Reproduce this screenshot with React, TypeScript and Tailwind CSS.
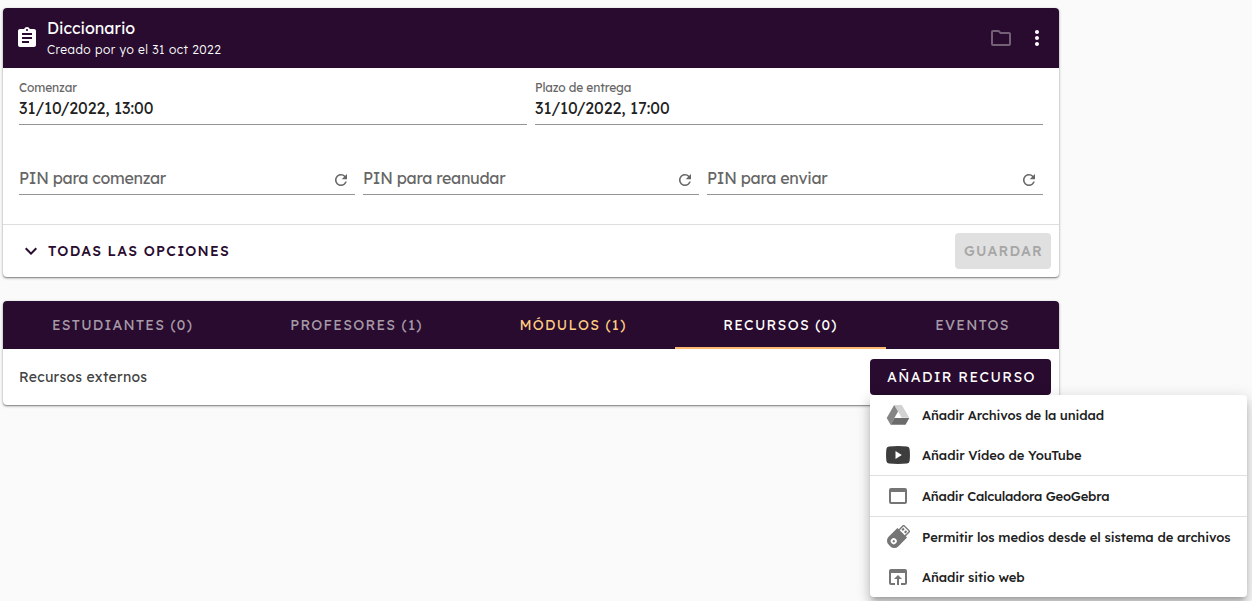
import { ReactNode } from "react";
import {
  MdAssignment,
  MdExpandMore,
  MdMoreVert,
  MdOpenInBrowser,
  MdOutlineFolder,
  MdRefresh,
  MdWebAsset,
} from "react-icons/md";

const DriveIcon = () => (
  <svg viewBox="0 0 24 24" className="size-6 shrink-0">
    <path d="M8.2 2h7.6l7.5 12.8h-7.6z" fill="#d2d2d2" />
    <path d="M8.2 2 12 8.5 4.6 21.7.7 15z" fill="#858585" />
    <path d="M8.4 15h14.9l-3.8 6.7H4.6z" fill="#6b6b6b" />
  </svg>
);

const YouTubeIcon = () => (
  <svg viewBox="0 0 24 24" className="size-6 shrink-0">
    <path
      d="M3 3.4Q12 2.6 21 3.4 23.4 3.6 23.6 6q.7 6 0 12-.2 2.4-2.6 2.6-9 .8-18 0Q.6 20.4.4 18q-.7-6 0-12Q.6 3.6 3 3.4z"
      fill="#3d3d3d"
    />
    <path d="m9.5 8 6.3 4-6.3 4z" fill="#fff" />
  </svg>
);

const UsbIcon = () => (
  <svg viewBox="0 0 24 24" className="size-6 shrink-0">
    <g transform="rotate(45 12 12)" fill="#757575">
      <path d="M7-.9h10v8H7z" />
      <path d="M5.2 6h13.6v12.500a5.500 5.500 0 0 1-5.500 5.500h-2.600a5.500 5.500 0 0 1-5.500-5.500z" />
      <path d="M8.400.4h7.200v5.600H8.400z" fill="#fff" />
      <path d="M9.200 1.800h2v2.500h-2zM12.800 1.800h2v2.500h-2z" />
      <circle cx="12" cy="18" r="3" fill="#fff" />
      <circle cx="12" cy="18" r="1.200" />
    </g>
  </svg>
);

const tabs = [
  { label: "ESTUDIANTES (0)", style: "w-[239px] text-white/60" },
  { label: "PROFESORES (1)", style: "w-[229px] text-white/60" },
  { label: "MÓDULOS (1)", style: "w-[204px] text-[#ffcc80]" },
  { label: "RECURSOS (0)", style: "w-[211px] text-white border-b-2 border-[#ffb870] pt-0.5" },
  { label: "EVENTOS", style: "w-[173px] text-white/60" },
];

const pins = ["PIN para comenzar", "PIN para reanudar", "PIN para enviar"];

function DateField({ label, value }: { label: string; value: string }) {
  return (
    <div className="h-[57px] flex-1 border-b border-[#949494] pt-3">
      <div className="text-xs leading-4 text-[#666] tracking-[-0.13px]">{label}</div>
      <div className="text-base leading-6 text-[#212121]">{value}</div>
    </div>
  );
}

function MenuItem({ icon, children, style }: { icon: ReactNode; children: ReactNode; style: string }) {
  return (
    <li className="flex h-10 items-center gap-3 px-4 text-[#757575]">
      {icon}
      <span className={`whitespace-nowrap text-[13px] leading-5 font-medium text-[#212121] ${style}`}>{children}</span>
    </li>
  );
}

export default function App() {
  return (
    <main className="h-[601px] overflow-hidden bg-[#fafafa] pl-[3px] pt-2 font-['Lexend','Inter',sans-serif]">
      {/* Assignment details */}
      <section className="h-[269px] w-[1056px] rounded bg-white shadow-[0_1px_3px_rgba(0,0,0,0.35),0_1px_1px_rgba(0,0,0,0.25)]">
        <header className="flex h-[60px] items-center rounded-t bg-[#280b2e] pl-3 pr-2.5 text-white">
          <MdAssignment className="size-6" />
          <div className="ml-2 flex-1 pt-0.5">
            <h1 className="text-base leading-5 font-normal">Diccionario</h1>
            <p className="mt-0.5 text-xs leading-5 font-light tracking-[0.48px]">Creado por yo el 31 oct 2022</p>
          </div>
          <MdOutlineFolder className="size-6 opacity-35" />
          <MdMoreVert className="ml-3 size-6" />
        </header>

        <div className="flex gap-2 px-4">
          <DateField label="Comenzar" value="31/10/2022, 13:00" />
          <DateField label="Plazo de entrega" value="31/10/2022, 17:00" />
        </div>

        <div className="mt-[38px] flex gap-2 px-4">
          {pins.map((pin) => (
            <div key={pin} className="flex h-8 flex-1 items-center justify-between border-b border-[#949494] pr-[5px] text-[#666]">
              <span className="pb-0.5 text-base tracking-[-0.3px]">{pin}</span>
              <MdRefresh className="mt-0.5 size-[18px]" />
            </div>
          ))}
        </div>

        <footer className="mt-[29px] flex h-[53px] items-center border-t border-[#dedede] pl-4 pr-2 text-sm font-medium tracking-[1.25px]">
          <button className="flex items-center text-[#280b2e]">
            <MdExpandMore className="size-6" />
            <span className="ml-[5px]">TODAS LAS OPCIONES</span>
          </button>
          <button className="ml-auto h-9 w-24 rounded bg-[#e0e0e0] pl-px text-[#a6a6a6]">GUARDAR</button>
        </footer>
      </section>

      {/* Resources */}
      <section className="mt-6 h-[104px] w-[1056px] rounded bg-white shadow-[0_1px_3px_rgba(0,0,0,0.35),0_1px_1px_rgba(0,0,0,0.25)]">
        <nav className="flex h-12 rounded-t bg-[#280b2e] text-sm tracking-[1.3px]">
          {tabs.map((tab) => (
            <button key={tab.label} className={`whitespace-nowrap ${tab.style}`}>
              {tab.label}
            </button>
          ))}
        </nav>
        <div className="flex h-14 items-center justify-between pl-4 pr-2">
          <span className="text-sm text-[#424242] tracking-[0.25px]">Recursos externos</span>
          <div className="relative">
            <button className="block h-9 w-[181px] rounded bg-[#280b2e] pl-0.5 text-sm tracking-[1.43px] text-white">
              AÑADIR RECURSO
            </button>
            <ul className="absolute left-0 top-9 w-[377px] rounded bg-white shadow-[0_5px_5px_-3px_rgba(0,0,0,0.2),0_8px_10px_1px_rgba(0,0,0,0.14),0_3px_14px_2px_rgba(0,0,0,0.12)]">
              <MenuItem icon={<DriveIcon />} style="tracking-[-0.13px]">Añadir Archivos de la unidad</MenuItem>
              <MenuItem icon={<YouTubeIcon />} style="tracking-[-0.06px]">Añadir Vídeo de YouTube</MenuItem>
              <li className="h-px bg-[#e0e0e0]" />
              <MenuItem icon={<MdWebAsset className="size-6" />} style="tracking-[-0.22px]">Añadir Calculadora GeoGebra</MenuItem>
              <li className="h-px bg-[#e0e0e0]" />
              <MenuItem icon={<UsbIcon />} style="tracking-[-0.06px]">Permitir los medios desde el sistema de archivos</MenuItem>
              <MenuItem icon={<MdOpenInBrowser className="size-6" />} style="tracking-[-0.1px]">Añadir sitio web</MenuItem>
            </ul>
          </div>
        </div>
      </section>
    </main>
  );
}
